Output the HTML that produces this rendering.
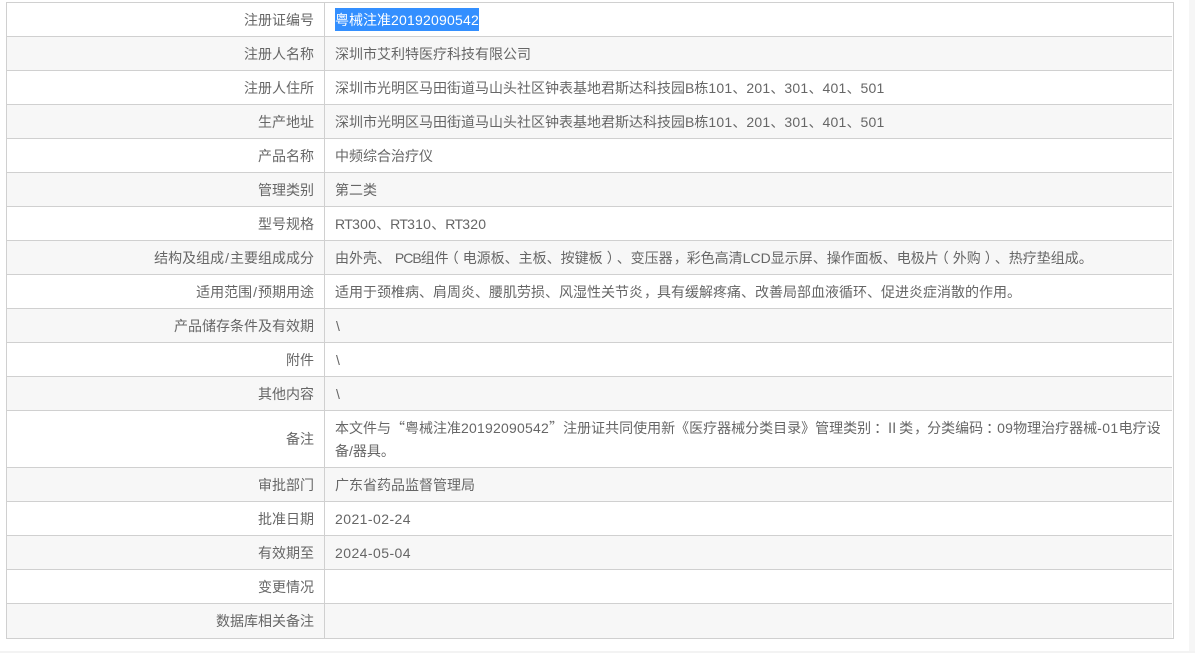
<!DOCTYPE html>
<html lang="zh-CN">
<head>
<meta charset="utf-8">
<title>注册证</title>
<style>
html,body{margin:0;padding:0;background:#fff;}
body{width:1195px;height:653px;overflow:hidden;position:relative;font-family:"Liberation Sans","Noto Sans CJK SC",sans-serif;font-size:14px;color:#666;text-spacing-trim:space-all;font-kerning:none;}
.strip-r{position:absolute;left:1189px;top:0;width:6px;height:653px;background:#f6f6f6;}
.strip-b{position:absolute;left:0;top:651px;width:1195px;height:2px;background:#f3f3f3;}
.tb{position:absolute;left:6px;top:2px;width:1166px;height:635px;border:1px solid #d0d0d0;}
.r{position:absolute;left:7px;width:1165px;box-sizing:border-box;border-bottom:1px solid #d0d0d0;}
.r.g{background:#f7f7f7;}
.l{position:absolute;left:0;top:0;bottom:0;width:307px;text-align:right;display:flex;align-items:center;justify-content:flex-end;white-space:nowrap;}
.v{position:absolute;left:328px;top:6px;width:835px;white-space:nowrap;line-height:23px;}
.vl{position:absolute;left:324px;top:3px;width:1px;height:635px;background:#d0d0d0;}
.sel{position:absolute;left:328px;top:5px;width:144px;background:#338fff;color:#fff;height:23px;line-height:25px;white-space:nowrap;}
.d{letter-spacing:.22px;}
.dt{letter-spacing:.44px;}
.rt{letter-spacing:-.8px;}
.pcb{letter-spacing:-1px;}
.c{font-family:"Noto Sans CJK SC",sans-serif;}
.pl,.pr,.cm,.cl{font-family:"Noto Sans CJK SC",sans-serif;position:relative;font-style:normal;}
.pl{left:-4px;}
.pr{left:4px;}
.cm{left:1px;}
.cl{left:3px;}
.sl{padding:0 1px;}
.bs{padding-left:1px;}
</style>
</head>
<body>
<div class="strip-r"></div>
<div class="strip-b"></div>
<div class="r" style="top:3px;height:34px"><div class="l">注册证编号</div><div class="sel">粤械注准<span class="d">20192090542</span></div></div>
<div class="r g" style="top:37px;height:34px"><div class="l">注册人名称</div><div class="v">深圳市艾利特医疗科技有限公司</div></div>
<div class="r" style="top:71px;height:34px"><div class="l">注册人住所</div><div class="v">深圳市光明区马田街道马山头社区钟表基地君斯达科技园B栋<span class="d">101</span>、<span class="d">201</span>、<span class="d">301</span>、<span class="d">401</span>、<span class="d">501</span></div></div>
<div class="r g" style="top:105px;height:34px"><div class="l">生产地址</div><div class="v">深圳市光明区马田街道马山头社区钟表基地君斯达科技园B栋<span class="d">101</span>、<span class="d">201</span>、<span class="d">301</span>、<span class="d">401</span>、<span class="d">501</span></div></div>
<div class="r" style="top:139px;height:34px"><div class="l">产品名称</div><div class="v">中频综合治疗仪</div></div>
<div class="r g" style="top:173px;height:34px"><div class="l">管理类别</div><div class="v">第二类</div></div>
<div class="r" style="top:207px;height:34px"><div class="l">型号规格</div><div class="v"><span class="rt">RT</span><span class="d">300</span>、<span class="rt">RT</span><span class="d">310</span>、<span class="rt">RT</span><span class="d">320</span></div></div>
<div class="r g" style="top:241px;height:34px"><div class="l"><span>结构及组成<span class="sl">/</span>主要组成成分</span></div><div class="v">由外壳、 <span class="pcb">PCB</span>组件<i class="pl">（</i>电源板、主板、按键板<i class="pr">）</i>、变压器<i class="cm">，</i>彩色高清LCD显示屏、操作面板、电极片<i class="pl">（</i>外购<i class="pr">）</i>、热疗垫组成。</div></div>
<div class="r" style="top:275px;height:34px"><div class="l"><span>适用范围<span class="sl">/</span>预期用途</span></div><div class="v">适用于颈椎病、肩周炎、腰肌劳损、风湿性关节炎<i class="cm">，</i>具有缓解疼痛、改善局部血液循环、促进炎症消散的作用。</div></div>
<div class="r g" style="top:309px;height:34px"><div class="l">产品储存条件及有效期</div><div class="v"><span class="bs">\</span></div></div>
<div class="r" style="top:343px;height:34px"><div class="l">附件</div><div class="v"><span class="bs">\</span></div></div>
<div class="r g" style="top:377px;height:34px"><div class="l">其他内容</div><div class="v"><span class="bs">\</span></div></div>
<div class="r" style="top:411px;height:57px"><div class="l">备注</div><div class="v">本文件与<span class="c">“</span>粤械注准<span class="d">20192090542</span><span class="c">”</span>注册证共同使用新《医疗器械分类目录》管理类别<i class="cl">：</i><span class="c">Ⅱ</span>类<i class="cm">，</i>分类编码<i class="cl">：</i><span class="d">09</span>物理治疗器械<span class="dt">-01</span>电疗设</div><div class="v" style="top:29px">备/器具。</div></div>
<div class="r g" style="top:468px;height:34px"><div class="l">审批部门</div><div class="v">广东省药品监督管理局</div></div>
<div class="r" style="top:502px;height:34px"><div class="l">批准日期</div><div class="v"><span class="dt">2021-02-24</span></div></div>
<div class="r g" style="top:536px;height:34px"><div class="l">有效期至</div><div class="v"><span class="dt">2024-05-04</span></div></div>
<div class="r" style="top:570px;height:34px"><div class="l">变更情况</div></div>
<div class="r g" style="top:604px;height:34px;border-bottom:0"><div class="l">数据库相关备注</div></div>
<div class="vl"></div>
<div class="tb"></div>
</body>
</html>
